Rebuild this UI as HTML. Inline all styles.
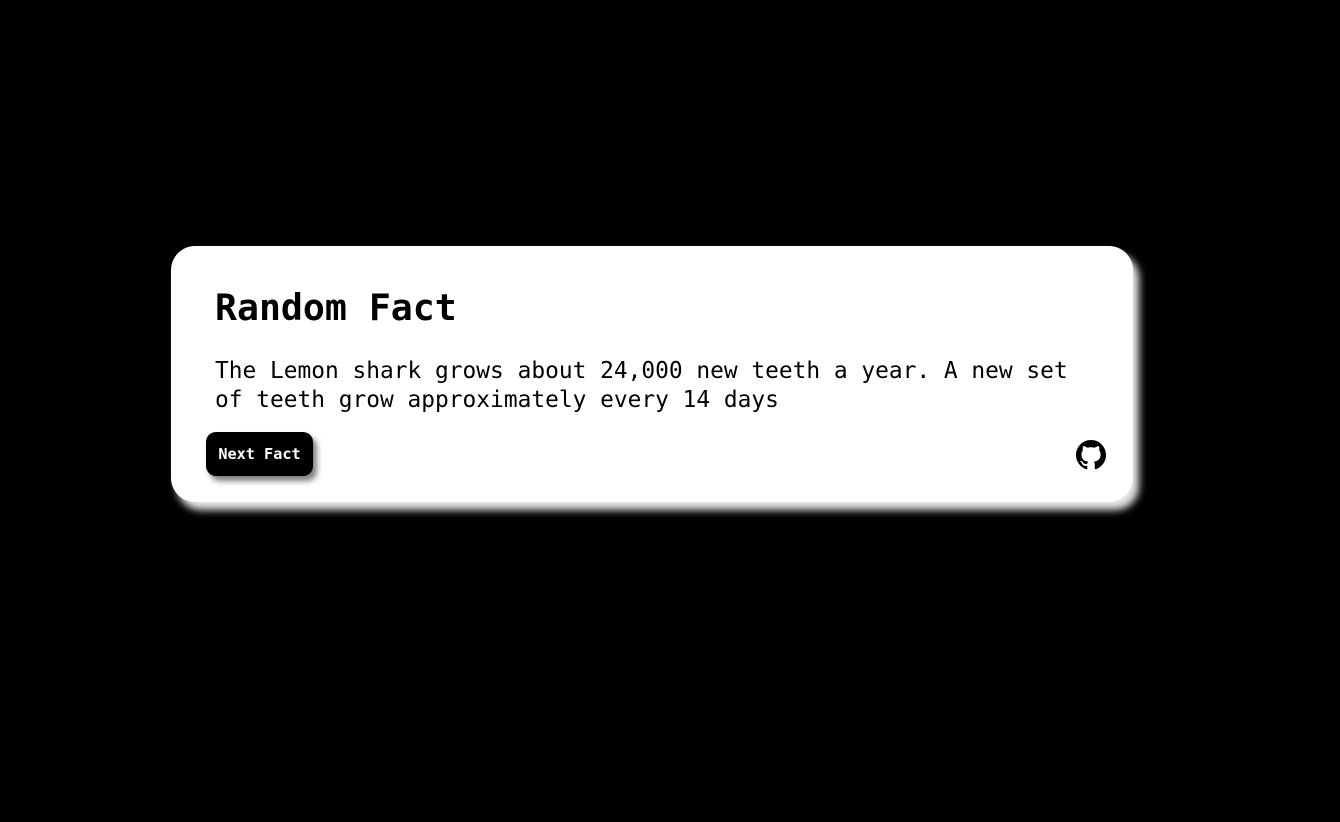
<!DOCTYPE html>
<html><head><style>
html,body{margin:0;height:822px;background:#000;overflow:hidden}
.card{position:absolute;left:171px;top:246px;width:962px;height:256px;background:#fff;border-radius:24px;box-shadow:6px 8px 8px rgba(255,255,255,0.9);font-family:"DejaVu Sans Mono","Liberation Mono",monospace;color:#000}
h1{position:absolute;left:44px;top:40px;margin:0;font-size:36.5px;font-weight:bold;line-height:44px}
p{position:absolute;left:44px;top:111px;margin:0;width:900px;font-size:22.85px;line-height:29px}
.btn{position:absolute;left:35px;top:186px;width:107px;height:44px;background:#000;color:#fff;border-radius:10px;font-weight:bold;font-size:15.2px;line-height:44px;text-align:center;box-shadow:4px 5px 6px rgba(0,0,0,0.5)}
svg{position:absolute;left:905px;top:194px}
</style></head><body>
<div class="card">
<h1>Random Fact</h1>
<p>The Lemon shark grows about 24,000 new teeth a year. A new set<br>of teeth grow approximately every 14 days</p>
<div class="btn">Next Fact</div>
<svg width="30" height="30" viewBox="0 0 16 16"><path fill="#000" d="M8 0C3.58 0 0 3.58 0 8c0 3.54 2.29 6.53 5.47 7.59.4.07.55-.17.55-.38 0-.19-.01-.82-.01-1.49-2.01.37-2.53-.49-2.69-.94-.09-.23-.48-.94-.82-1.13-.28-.15-.68-.52-.01-.53.63-.01 1.08.58 1.23.82.72 1.21 1.87.87 2.33.66.07-.52.28-.87.51-1.07-1.78-.2-3.64-.89-3.64-3.95 0-.87.31-1.59.82-2.15-.08-.2-.36-1.02.08-2.12 0 0 .67-.21 2.2.82.64-.18 1.32-.27 2-.27.68 0 1.36.09 2 .27 1.53-1.04 2.2-.82 2.2-.82.44 1.1.16 1.92.08 2.12.51.56.82 1.27.82 2.15 0 3.07-1.87 3.75-3.65 3.95.29.25.54.73.54 1.48 0 1.07-.01 1.93-.01 2.2 0 .21.15.46.55.38A8.01 8.01 0 0016 8c0-4.42-3.58-8-8-8z"/></svg>
</div>
</body></html>
